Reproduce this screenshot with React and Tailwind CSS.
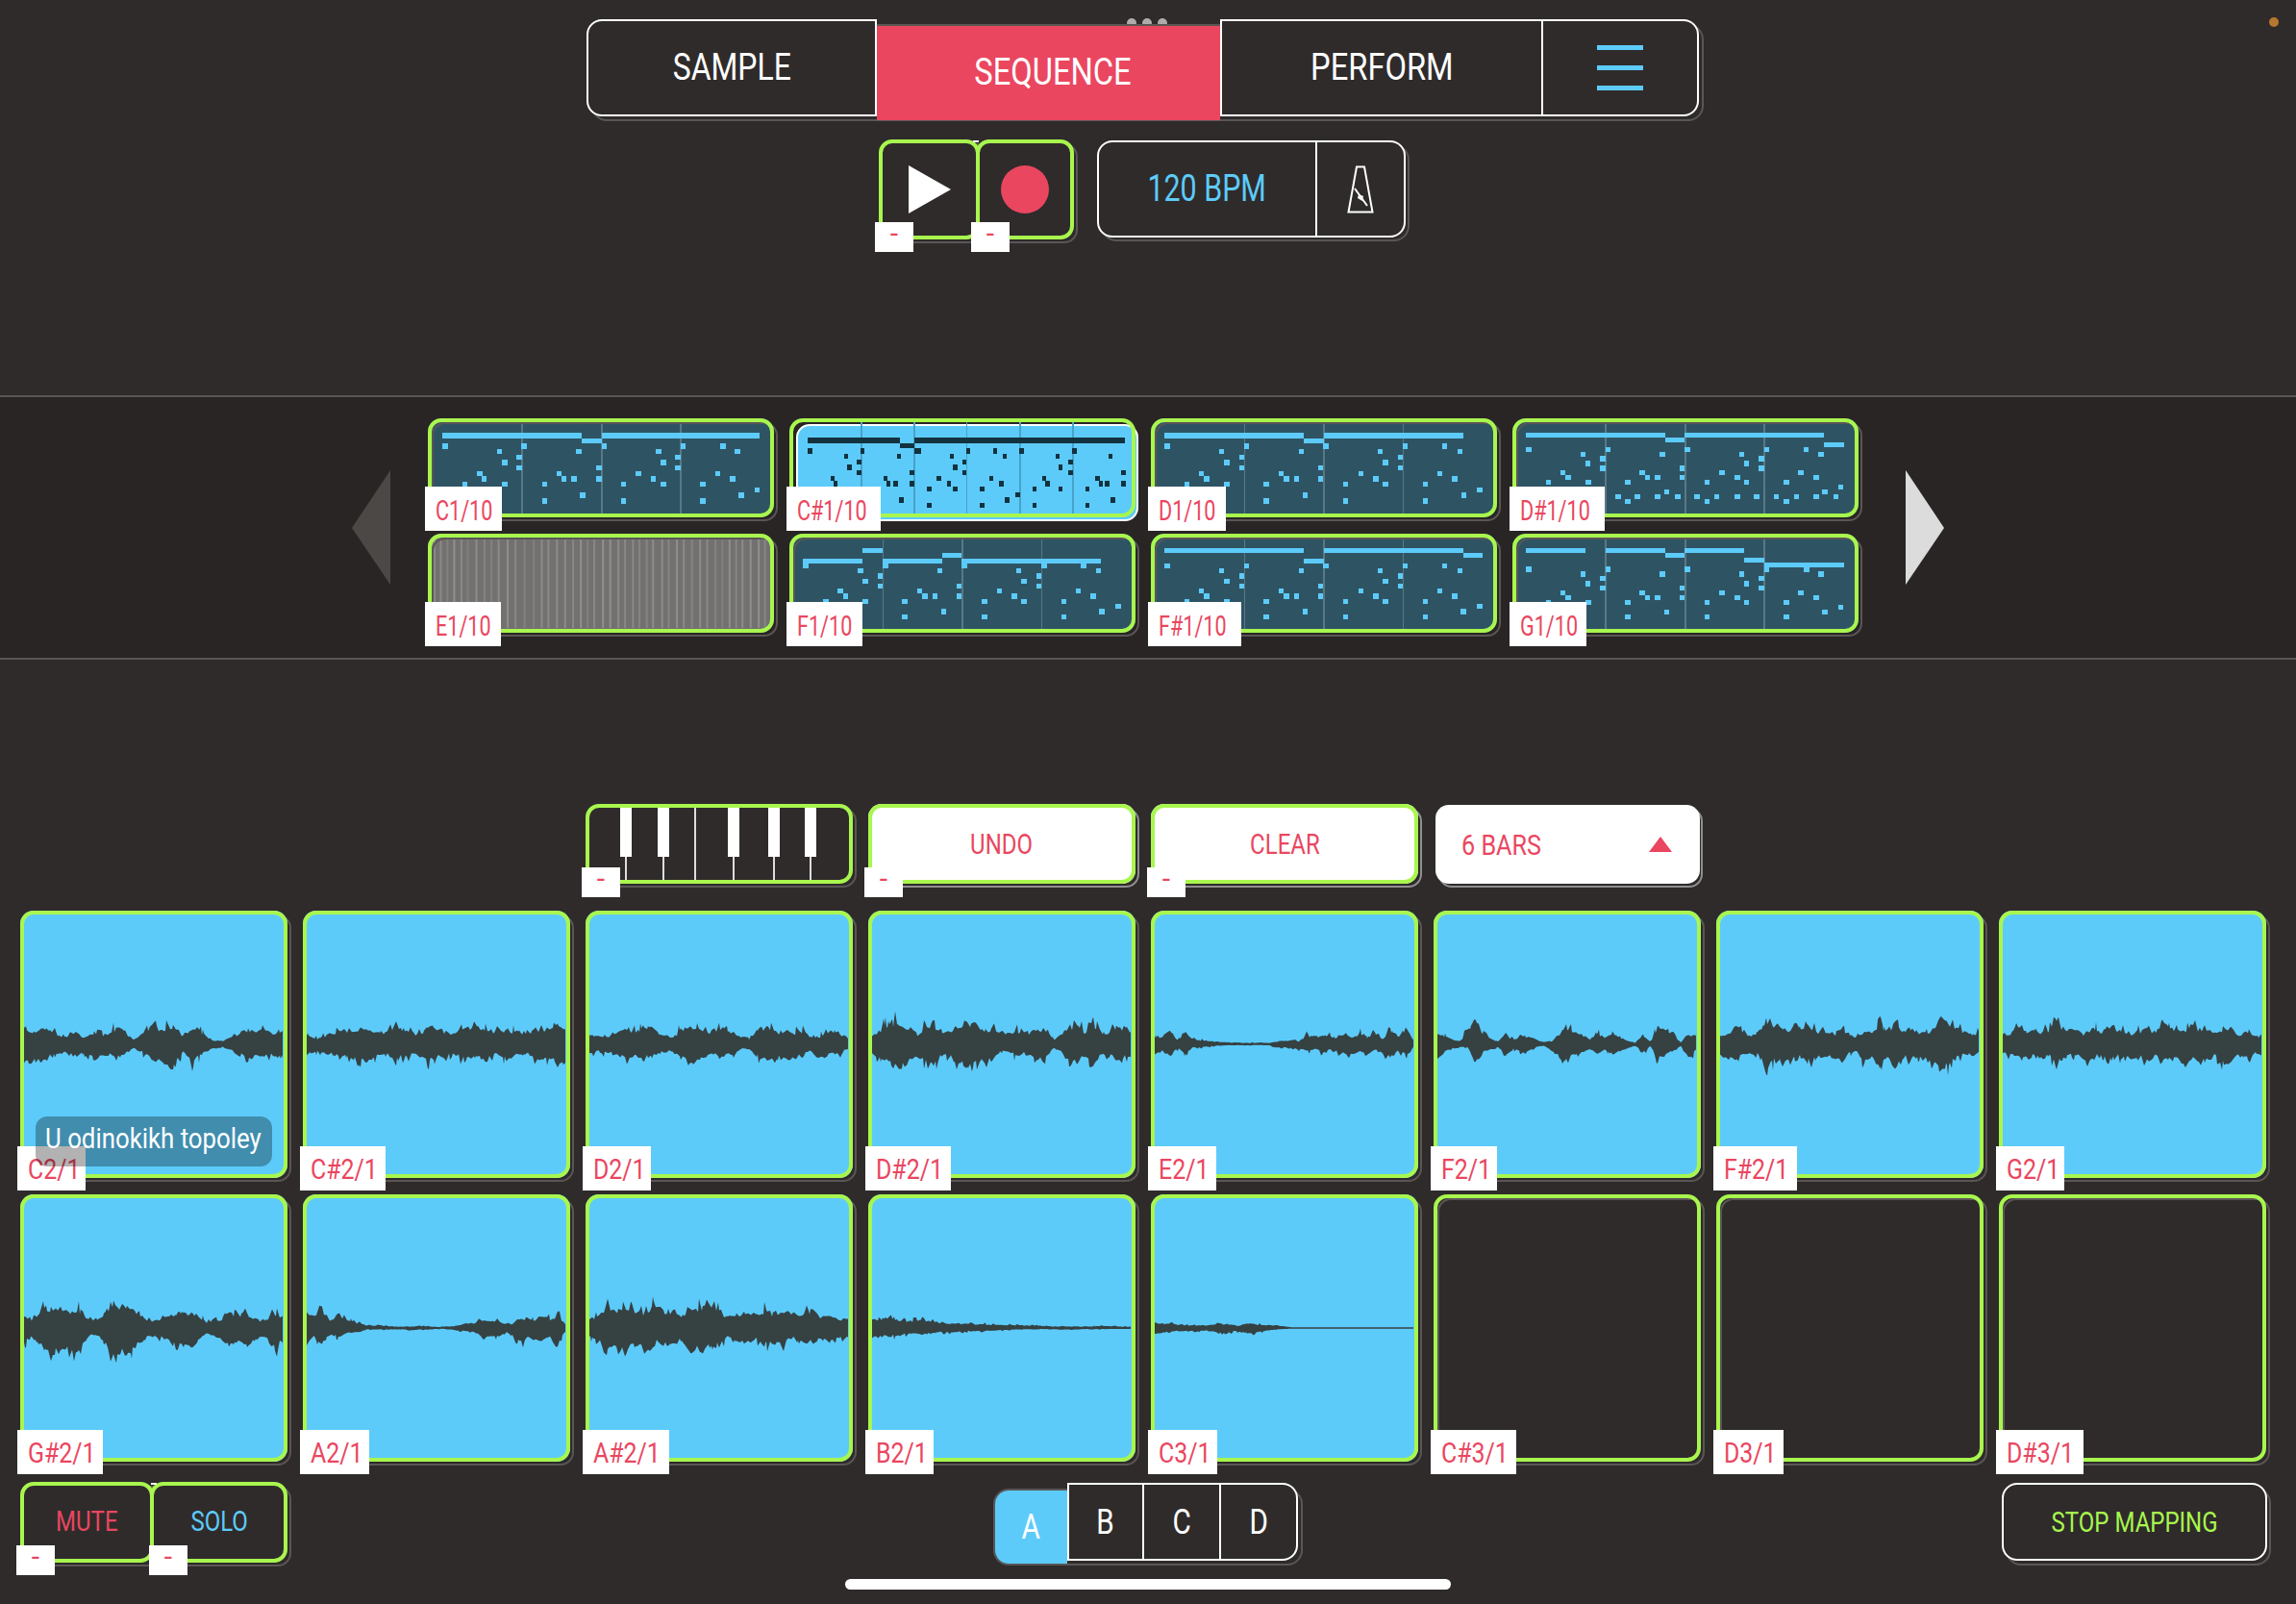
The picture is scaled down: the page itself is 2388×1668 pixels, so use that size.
const BLUE = '#5dcbfa';

const chartData = {
  c1: {
    o: [191, 108], lines: [369, 520, 670],
    bars: [[219, 482, 153, 171], [482, 520, 171, 187], [520, 820, 153, 171]],
    dots: [[224,195],[327,212],[373,195],[477,212],[525,195],[628,212],[675,195],[750,195],[778,212],[337,246],[364,229],[364,263],[515,263],[637,246],[665,229],[665,263],[289,280],[298,297],[440,280],[449,297],[468,297],[515,297],[590,280],[618,297],[740,280],[769,297],[261,314],[337,314],[412,314],[562,314],[637,314],[712,314],[815,331],[412,366],[484,348],[562,366],[712,366],[785,348]],
  },
  cs1: {
    o: [878, 108], lines: [1014, 1114, 1214, 1315, 1415], sel: true,
    bars: [[913, 1088, 168, 185], [1088, 1114, 185, 202], [1114, 1514, 168, 185], [1114, 1128, 202, 218]],
    dots: [[917,210],[985,227],[1017,210],[1086,227],[1186,227],[1217,210],[1268,210],[1286,227],[1318,210],[1386,227],[1418,210],[1487,227],[1010,244],[992,261],[1010,278],[1110,278],[1192,261],[1210,244],[1210,278],[1392,261],[1411,244],[1411,278],[1511,278],[960,295],[966,312],[1060,295],[1066,312],[1079,312],[1110,312],[1161,295],[1180,312],[1192,329],[1261,295],[1280,312],[1361,295],[1367,312],[1392,329],[1462,295],[1468,312],[1480,312],[1511,312],[1143,329],[1243,329],[1343,329],[1443,329],[1090,363],[1143,380],[1243,380],[1291,363],[1311,346],[1343,380],[1443,380],[1491,363]],
  },
  d1: {
    o: [32, 108], lines: [209, 360, 510],
    bars: [[58, 322, 153, 171], [322, 360, 171, 187], [360, 624, 153, 171]],
    dots: [[63,195],[166,212],[213,195],[317,212],[364,195],[467,212],[514,195],[589,195],[618,212],[176,246],[204,229],[204,263],[354,263],[477,246],[505,229],[505,263],[128,280],[138,297],[279,280],[289,297],[308,297],[354,297],[430,280],[458,297],[580,280],[608,297],[100,314],[176,314],[251,314],[401,314],[477,314],[552,314],[655,331],[251,366],[324,348],[401,366],[552,366],[625,348]],
  },
  ds1: {
    o: [718, 108], lines: [894, 1045, 1195],
    bars: [[744, 1007, 153, 168], [1007, 1045, 168, 182], [1045, 1308, 153, 168], [1308, 1346, 183, 197]],
    dots: [[749,205],[852,220],[899,205],[1002,220],[1050,205],[1153,220],[1200,205],[1275,205],[1303,220],[861,249],[889,234],[889,264],[1162,249],[1190,234],[1190,264],[1040,264],[814,278],[824,293],[964,278],[974,293],[993,293],[1040,293],[1115,278],[1144,293],[1265,278],[1294,293],[786,308],[862,308],[937,308],[1087,308],[1162,308],[1237,308],[1340,322],[918,352],[937,367],[955,352],[993,352],[1010,338],[1031,352],[1068,352],[1087,367],[1105,352],[1144,352],[1181,352],[1218,352],[1237,367],[1256,352],[1294,352],[1310,338],[1331,352]],
  },
  f1: {
    o: [878, 468], lines: [1055, 1205, 1356],
    bars: [[904,1017,545,561],[904,915,561,577],[1017,1055,513,528],[1055,1168,545,561],[1055,1066,561,577],[1168,1205,529,544],[1205,1468,545,561],[1205,1216,561,577],[1355,1366,561,577],[1430,1441,561,577]],
    dots: [[1013,584],[1163,584],[1313,584],[1464,584],[1050,600],[1351,600],[1022,616],[1323,616],[1050,632],[1200,632],[1351,632],[975,647],[985,663],[1125,647],[1135,663],[1154,663],[1200,663],[1276,647],[1304,663],[1426,647],[1454,663],[947,679],[1022,679],[1097,679],[1248,679],[1323,679],[1398,679],[1501,695],[1470,711],[1170,711],[1097,727],[1248,727],[1398,727]],
  },
  fs1: {
    o: [32, 468], lines: [209, 360, 510],
    bars: [[58,322,513,528],[322,360,545,560],[360,624,513,528],[624,660,529,544]],
    dots: [[63,568],[166,584],[213,568],[317,584],[364,568],[467,584],[514,568],[589,568],[618,584],[176,616],[204,600],[204,632],[477,616],[505,600],[505,632],[354,632],[128,647],[138,663],[279,647],[289,663],[308,663],[354,663],[430,647],[458,663],[580,647],[608,663],[100,679],[176,679],[251,679],[401,679],[477,679],[552,679],[655,695],[624,711],[324,711],[251,727],[401,727],[552,727]],
  },
  g1: {
    o: [718, 468], lines: [894, 1045, 1195],
    bars: [[744,857,513,528],[894,1007,513,528],[1007,1045,529,542],[1045,1158,513,528],[1158,1195,543,557],[1195,1346,558,572],[1195,1205,572,587],[1270,1281,572,587]],
    dots: [[749,579],[852,594],[899,579],[1002,594],[1050,579],[1153,594],[1303,594],[861,624],[889,608],[889,638],[1162,624],[1190,608],[1190,638],[1040,638],[814,653],[824,668],[964,653],[974,668],[993,668],[1040,668],[1115,653],[1144,668],[1265,653],[1294,668],[786,683],[862,683],[937,683],[1087,683],[1162,683],[1237,683],[1340,698],[1310,712],[1010,712],[937,727],[1087,727],[1237,727]],
  },
};

function Chart({ d }) {
  const [ox, oy] = d.o;
  const ink = d.sel ? '#13323f' : BLUE;
  const w = d.sel ? 8 : 10;
  return (
    <svg viewBox={`${ox} ${oy} 656 309`} preserveAspectRatio="none" shapeRendering="crispEdges" className="absolute inset-0 w-full h-full">
      {d.lines.map((x) => (
        <rect key={x} x={x - 1} y={oy} width="3" height="309" fill={d.sel ? '#47a3c9' : '#5a7884'} />
      ))}
      {d.bars.map((b, i) => (
        <rect key={i} x={b[0]} y={b[2]} width={b[1] - b[0]} height={b[3] - b[2]} fill={ink} />
      ))}
      {d.dots.map((p, i) => (
        <rect key={i} x={p[0] - w / 2} y={p[1] - 8} width={w} height="16" fill={ink} />
      ))}
    </svg>
  );
}

function rng(seed) {
  let s = seed;
  return () => {
    s = (s * 16807) % 2147483647;
    return s / 2147483647;
  };
}

function Stripes() {
  const r = rng(77);
  const xs = [];
  for (let x = 6; x < 352; x += 6.5 + r() * 3) xs.push(x);
  return (
    <svg viewBox="0 0 360 103" preserveAspectRatio="none" className="absolute inset-0 w-full h-full">
      {xs.map((x, i) => (
        <rect key={i} x={x} y="5" width="2" height="93" fill="#ffffff" opacity={0.1 + r() * 0.12} />
      ))}
    </svg>
  );
}

function spiky(r, n) {
  const out = [];
  let from = 0.9;
  while (out.length < n) {
    const len = 1 + Math.floor(r() * 3);
    const to = r() < 0.12 ? 1.2 + r() * 0.2 : 0.72 + r() * 0.36;
    for (let k = 0; k < len && out.length < n; k++) out.push(from + ((to - from) * k) / len);
    from = to;
  }
  return out;
}

function Wave({ up, low, seed }) {
  const W = 270;
  const C = 50;
  const r = rng(seed * 7919 + 13);
  const su = spiky(r, W);
  const sl = spiky(r, W);
  const at = (arr, i) => {
    const f = (i / (W - 1)) * (arr.length - 1);
    const a = Math.floor(f);
    const b = Math.min(arr.length - 1, a + 1);
    return (arr[a] + (arr[b] - arr[a]) * (f - a)) / 3;
  };
  const top = [];
  const bot = [];
  for (let i = 0; i < W; i++) {
    top.push(`${i},${(C - Math.max(0.7, at(up, i) * su[i])).toFixed(1)}`);
    bot.unshift(`${i},${(C + Math.max(0.7, at(low, i) * sl[i])).toFixed(1)}`);
  }
  return (
    <svg viewBox={`0 0 ${W} 100`} className="w-[270px] h-[100px] shrink-0">
      <polygon points={[...top, ...bot].join(' ')} fill="#364142" />
    </svg>
  );
}

function Frame({ className = '', fill = '', ringClass = 'border-[#5a5656]', ringOver = false, content, children }) {
  const ring = <div className={`absolute inset-0 translate-x-[4px] translate-y-[4px] rounded-[14px] border-2 ${ringClass}`} />;
  return (
    <div className={`relative ${className}`}>
      {!ringOver && ring}
      <div className={`absolute inset-0 rounded-[14px] overflow-hidden ${fill}`}>{content}</div>
      {ringOver && ring}
      <div className="absolute inset-0 rounded-[14px] border-4 border-[#a8f64e]" />
      {children}
    </div>
  );
}

function Tag({ label, w, pad = false }) {
  return (
    <div className={`absolute left-[-3px] h-[46px] ${w} ${pad ? 'bottom-[-13px] pt-[1px]' : 'bottom-[-14px] pt-[3px]'} bg-white pl-[11px] flex items-center text-[30px] leading-none text-[#ea4660] whitespace-nowrap`}>
      <span className={`inline-block origin-left ${pad ? 'scale-x-[0.83]' : 'scale-x-[0.72]'}`}>{label}</span>
    </div>
  );
}

function Minus({ className = '' }) {
  return (
    <div className={`absolute w-[40px] h-[31px] bg-white flex justify-center text-[30px] leading-[24px] text-[#ea4660] ${className}`}>-</div>
  );
}

const clips = [
  { id: 'c1', label: 'C1/10', w: 'w-[80px]' },
  { id: 'cs1', label: 'C#1/10', w: 'w-[98px]' },
  { id: 'd1', label: 'D1/10', w: 'w-[81px]' },
  { id: 'ds1', label: 'D#1/10', w: 'w-[99px]' },
  { id: 'e1', label: 'E1/10', w: 'w-[79px]' },
  { id: 'f1', label: 'F1/10', w: 'w-[79px]' },
  { id: 'fs1', label: 'F#1/10', w: 'w-[97px]' },
  { id: 'g1', label: 'G1/10', w: 'w-[80px]' },
];

const pads = [
  { label: 'C2/1', w: 'w-[71px]', up: [60,45,50,40,25,42,25,40,30,50,50,15,40,60,50,65,30,60,35,15,10,30,40,55,45,35,50], low: [65,55,60,30,30,40,30,50,35,40,40,15,30,55,60,80,25,65,30,15,10,25,40,45,40,35,45] },
  { label: 'C#2/1', w: 'w-[89px]', up: [30,20,30,40,50,55,45,35,45,55,45,35,50,60,40,40,50,60,50,40,50,45,40,50,50,70,60], low: [35,25,30,35,40,50,55,40,35,50,40,35,60,45,40,35,55,40,55,35,50,40,30,50,45,55,65] },
  { label: 'D2/1', w: 'w-[71px]', up: [30,25,25,30,45,55,45,55,55,40,30,20,50,55,55,45,35,50,55,40,25,20,45,55,50,40,50,40,45,30,25,35,45,35,20], low: [30,25,30,25,40,60,35,60,35,30,25,20,50,55,60,45,30,45,40,30,15,15,40,50,60,45,60,40,30,25,40,40,35,30,15] },
  { label: 'D#2/1', w: 'w-[89px]', up: [30,45,70,75,60,55,35,60,65,40,40,65,70,70,60,45,55,40,40,45,35,45,45,50,15,35,60,60,45,65,45,35,55,55,50], low: [30,50,65,75,80,60,45,60,70,40,40,55,70,70,60,55,50,25,30,40,25,40,55,40,10,30,70,60,40,70,40,35,50,45,40] },
  { label: 'E2/1', w: 'w-[71px]', up: [30,25,45,15,45,15,15,12,10,8,6,6,5,5,6,5,8,12,14,10,30,25,25,30,20,35,25,40,25,40,20,50,25,50,15], low: [35,25,40,15,30,10,10,8,5,4,3,3,3,3,3,3,10,10,15,15,25,15,30,20,25,35,30,25,40,20,30,40,25,35,10] },
  { label: 'F2/1', w: 'w-[69px]', up: [35,25,15,10,50,85,35,20,8,35,15,25,30,15,8,10,35,60,40,35,15,40,20,40,25,15,5,30,8,60,50,40,5,35,30], low: [50,25,15,10,10,70,30,15,8,45,15,30,20,10,5,20,40,60,35,25,15,30,15,35,25,15,5,30,5,55,35,25,5,50,20] },
  { label: 'F#2/1', w: 'w-[87px]', up: [30,35,55,45,30,45,85,70,60,50,65,50,60,40,45,35,50,35,25,45,35,65,50,70,40,50,45,35,50,90,70,55,40,35,40], low: [35,45,50,35,30,35,85,60,55,45,50,40,55,40,55,35,60,30,25,65,50,70,40,75,40,50,50,55,75,80,70,50,35,35,30] },
  { label: 'G2/1', w: 'w-[71px]', up: [35,30,70,45,50,40,50,70,45,55,45,30,60,35,65,40,45,35,45,50,45,75,50,60,45,65,50,45,35,45,55,30,40,30,25], low: [30,40,35,50,40,55,40,60,45,40,35,55,40,45,60,40,50,45,40,55,40,65,50,50,70,40,65,55,40,65,55,35,50,35,25] },
  { label: 'G#2/1', w: 'w-[89px]', up: [40,30,55,70,60,65,55,65,45,30,30,60,70,70,60,55,25,25,25,45,45,50,50,40,20,25,30,50,40,50,35,25,30,50,35], low: [50,30,50,85,80,85,70,80,45,20,30,70,85,85,75,55,35,30,30,45,65,60,60,40,20,30,40,55,50,65,45,35,40,75,35] },
  { label: 'A2/1', w: 'w-[72px]', up: [55,45,55,30,40,30,20,15,8,8,8,6,5,5,6,6,5,4,5,6,10,15,15,25,20,30,15,15,30,35,25,40,30,45,15], low: [60,30,60,25,30,20,15,12,5,5,5,5,5,5,8,5,5,3,3,5,10,12,15,30,25,30,15,20,50,35,30,50,25,55,10] },
  { label: 'A#2/1', w: 'w-[90px]', up: [30,40,75,60,65,60,50,80,55,60,40,75,65,70,60,35,45,50,45,60,45,45,55,45,60,40,35,30,35], low: [30,45,70,60,75,55,75,45,55,60,40,80,60,70,60,30,50,55,40,60,50,55,35,50,50,40,45,30,35] },
  { label: 'B2/1', w: 'w-[71px]', up: [30,35,25,25,25,20,15,15,12,12,10,10,8,8,5,5,5,6,7,5,5], low: [35,30,25,20,20,15,15,12,10,10,8,5,5,3,5,5,4,4,4,3,3] },
  { label: 'C3/1', w: 'w-[72px]', up: [20,15,10,8,10,15,8,15,10,8,3,2,1,1,1,1,1,1,1,1], low: [20,12,10,10,10,20,10,20,10,5,2,1,1,1,1,1,1,1,1,1] },
  { label: 'C#3/1', w: 'w-[89px]' },
  { label: 'D3/1', w: 'w-[73px]' },
  { label: 'D#3/1', w: 'w-[91px]' },
];

function ClipCell({ clip }) {
  if (clip.id === 'cs1') {
    return (
      <div className="relative w-[360px] h-[103px]">
        <div className="absolute left-[7px] top-[6px] right-[-3px] bottom-[-4px] rounded-[14px] border-2 border-white bg-[#5dcbfa]" />
        <div className="absolute inset-0"><Chart d={chartData.cs1} /></div>
        <div className="absolute inset-0 rounded-[14px] border-4 border-[#a8f64e]" />
        <Tag label={clip.label} w={clip.w} />
      </div>
    );
  }
  const isE = clip.id === 'e1';
  return (
    <Frame
      className="w-[360px] h-[103px]"
      fill={isE ? 'bg-[#737070]' : 'bg-[#2e5464]'}
      ringOver
      content={isE ? <Stripes /> : <Chart d={chartData[clip.id]} />}
    >
      <Tag label={clip.label} w={clip.w} />
    </Frame>
  );
}

function PadCell({ pad, index }) {
  const filled = !!pad.up;
  return (
    <Frame
      className="w-[278px] h-[278px]"
      fill={filled ? 'bg-[#5dcbfa] flex items-center justify-center' : ''}
      ringOver={!filled}
      content={filled ? <Wave up={pad.up} low={pad.low} seed={index + 1} /> : null}
    >
      <Tag label={pad.label} w={pad.w} pad />
      {index === 0 && (
        <div className="absolute left-[16px] top-[214px] w-[246px] h-[52px] rounded-[12px] bg-black/30 pl-[10px] pb-[6px] flex items-center text-[30px] leading-none text-white whitespace-nowrap">
          <span className="inline-block origin-left scale-x-[0.86]">U odinokikh topoley</span>
        </div>
      )}
    </Frame>
  );
}

function PairButton({ left, right, leftW, rightW, h, tagTop, secondTag, junction }) {
  return (
    <div className={`relative flex ${h}`}>
      <div className="absolute inset-0 translate-x-[4px] translate-y-[4px] rounded-[14px] border-2 border-[#5a5656]" />
      <div className={`relative ${leftW} h-full rounded-[14px] border-4 border-[#a8f64e] bg-[#2f2b2b] flex items-center justify-center`}>
        {left}
      </div>
      <div className={`relative ${rightW} ml-[-4px] h-full rounded-[14px] border-4 border-[#a8f64e] bg-[#2f2b2b] flex items-center justify-center`}>
        {right}
      </div>
      <div className={`absolute top-[1px] w-[6px] h-[2px] bg-white ${junction}`} />
      <Minus className={`left-[-4px] ${tagTop}`} />
      <Minus className={`${secondTag} ${tagTop}`} />
    </div>
  );
}

function ToolBtn({ children }) {
  return (
    <Frame className="w-[278px] h-[83px]" fill="bg-white" ringClass="border-[#8f8f8f]" content={null}>
      <div className="absolute inset-0 flex items-center justify-center text-[30px] text-[#ea4660]">
        <span className="inline-block scale-x-[0.8]">{children}</span>
      </div>
      <Minus className="left-[-4px] top-[66px]" />
    </Frame>
  );
}

export default function App() {
  return (
    <div className="relative w-[2388px] h-[1668px] overflow-hidden bg-[#2f2b2b] flex flex-col font-['Roboto',sans-serif]">
      {/* three dots + status dot */}
      <div className="absolute left-[1172px] top-[19px] flex gap-[6px]">
        <div className="w-[10px] h-[10px] rounded-full bg-[#aeacac]" />
        <div className="w-[10px] h-[10px] rounded-full bg-[#aeacac]" />
        <div className="w-[10px] h-[10px] rounded-full bg-[#aeacac]" />
      </div>
      <div className="absolute left-[2360px] top-[18px] w-[10px] h-[10px] rounded-full bg-[#b9762f]" />

      {/* Tabs */}
      <div className="relative flex ml-[610px] mt-[20px] w-[1157px] h-[101px] text-[38px] text-white">
        <div className="absolute inset-0 translate-x-[5px] translate-y-[5px] rounded-[16px] border-2 border-[#5a5656]" />
        <div className="relative w-[302px] h-full rounded-l-[16px] border-2 border-white bg-[#2f2b2b] flex items-center justify-center">
          <span className="inline-block scale-x-[0.84]">SAMPLE</span>
        </div>
        <div className="relative w-[357px] h-[98px] mt-[7px] pl-[8px] pb-[2px] bg-[#ea4660] flex items-center justify-center">
          <span className="inline-block scale-x-[0.86]">SEQUENCE</span>
        </div>
        <div className="relative w-[336px] h-full border-2 border-white bg-[#2f2b2b] flex items-center justify-center">
          <span className="inline-block scale-x-[0.86]">PERFORM</span>
        </div>
        <div className="relative w-[162px] h-full rounded-r-[16px] border-2 border-l-0 border-white bg-[#2f2b2b] flex flex-col items-center justify-center gap-[16px]">
          <div className="w-[48px] h-[5px] bg-[#5dcbfa]" />
          <div className="w-[48px] h-[5px] bg-[#5dcbfa]" />
          <div className="w-[48px] h-[5px] bg-[#5dcbfa]" />
        </div>
      </div>

      {/* Transport */}
      <div className="flex items-start ml-[914px] mt-[24px] h-[104px]">
        <PairButton
          leftW="w-[105px]"
          rightW="w-[102px]"
          h="h-[104px]"
          tagTop="top-[86px]"
          secondTag="left-[96px]"
          junction="left-[98px]"
          left={
            <svg viewBox="0 0 44 50" className="w-[44px] h-[50px]">
              <polygon points="0,0 44,25 0,50" fill="#ffffff" />
            </svg>
          }
          right={<div className="w-[50px] h-[50px] rounded-full bg-[#ea4660]" />}
        />
        <div className="relative flex ml-[24px] mt-[1px] w-[321px] h-[101px]">
          <div className="absolute inset-0 translate-x-[4px] translate-y-[4px] rounded-[16px] border-2 border-[#5a5656]" />
          <div className="relative w-[229px] h-full rounded-l-[16px] border-2 border-white bg-[#2f2b2b] flex items-center justify-center text-[38px] text-[#5dcbfa]">
            <span className="inline-block scale-x-[0.8]">120 BPM</span>
          </div>
          <div className="relative w-[92px] h-full rounded-r-[16px] border-2 border-l-0 border-white bg-[#2f2b2b] flex items-center justify-center">
            <svg viewBox="0 0 28 50" className="w-[28px] h-[50px]" fill="none" stroke="#ffffff" strokeWidth="2">
              <path d="M10 1.5h8l8.5 47h-25z" />
              <path d="M8 24l13 18" />
              <path d="M12 30l5 2-1 5-5-3z" fill="#ffffff" stroke="none" />
            </svg>
          </div>
        </div>
      </div>

      {/* Clip band */}
      <div className="flex items-center mt-[162px] h-[275px] pl-[366px] bg-[#292525] border-y-2 border-[#5a5656]">
        <svg viewBox="0 0 40 119" className="w-[40px] h-[119px] shrink-0">
          <polygon points="40,0 0,60 40,119" fill="#4b4845" />
        </svg>
        <div className="grid grid-cols-[repeat(4,360px)] grid-rows-[103px_103px] gap-x-[16px] gap-y-[17px] ml-[39px] mt-[-4px]">
          {clips.map((c) => (
            <ClipCell key={c.id} clip={c} />
          ))}
        </div>
        <svg viewBox="0 0 40 119" className="w-[40px] h-[119px] shrink-0 ml-[49px]">
          <polygon points="0,0 40,60 0,119" fill="#dcdcdc" />
        </svg>
      </div>

      {/* Toolbar */}
      <div className="flex gap-x-[16px] ml-[609px] mt-[150px] h-[83px]">
        <Frame className="w-[278px] h-[83px]" fill="bg-[#2f2b2b]" content={null}>
          <svg viewBox="0 0 278 83" className="absolute inset-0 w-full h-full" shapeRendering="crispEdges">
            {[36, 75, 148, 190, 228].map((x) => (
              <rect key={x} x={x} y="4" width="12" height="51" fill="#ffffff" />
            ))}
            {[41, 80, 153, 195, 233].map((x) => (
              <rect key={x} x={x} y="55" width="2" height="24" fill="#dddddd" />
            ))}
            <rect x="113" y="4" width="2" height="75" fill="#dddddd" />
          </svg>
          <Minus className="left-[-4px] top-[66px]" />
        </Frame>
        <ToolBtn>UNDO</ToolBtn>
        <ToolBtn>CLEAR</ToolBtn>
        <div className="relative w-[275px] h-[83px] ml-[2px]">
          <div className="absolute inset-0 translate-x-[3px] translate-y-[4px] rounded-[14px] border-2 border-[#8f8f8f]" />
          <div className="relative w-full h-[82px] mt-[1px] rounded-[14px] bg-white flex items-center justify-between pl-[27px] pr-[29px] text-[30px] text-[#ea4660]">
            <span className="inline-block origin-left scale-x-[0.84]">6 BARS</span>
            <svg viewBox="0 0 24 16" className="w-[24px] h-[16px]">
              <polygon points="12,0 24,16 0,16" fill="#ea4660" />
            </svg>
          </div>
        </div>
      </div>

      {/* Pads */}
      <div className="grid grid-cols-[repeat(8,278px)] gap-x-[16px] gap-y-[17px] ml-[21px] mt-[28px]">
        {pads.map((p, i) => (
          <PadCell key={p.label} pad={p} index={i} />
        ))}
      </div>

      {/* Bottom row */}
      <div className="flex items-start ml-[21px] mt-[21px] h-[84px]">
        <PairButton
          leftW="w-[139px]"
          rightW="w-[143px]"
          h="h-[84px]"
          tagTop="top-[66px]"
          secondTag="left-[134px]"
          junction="left-[136px]"
          left={<span className="inline-block mb-[3px] scale-x-[0.8] text-[30px] text-[#ea4660]">MUTE</span>}
          right={<span className="inline-block mb-[3px] ml-[2px] scale-x-[0.8] text-[30px] text-[#5dcbfa]">SOLO</span>}
        />
        <div className="relative flex ml-[734px] mt-[1px] w-[317px] h-[81px] text-[37px] text-white">
          <div className="absolute left-0 top-[6px] w-[322px] h-[80px] rounded-[16px] border-2 border-[#5a5656]" />
          <div className="relative w-[75px] h-[76px] mt-[8px] ml-[2px] rounded-l-[14px] bg-[#5dcbfa] flex items-center justify-center">
            <span className="inline-block scale-x-[0.8]">A</span>
          </div>
          <div className="relative w-[81px] h-full border-2 border-white bg-[#2f2b2b] flex items-center justify-center">
            <span className="inline-block scale-x-[0.8]">B</span>
          </div>
          <div className="relative w-[80px] h-full border-2 border-l-0 border-white bg-[#2f2b2b] flex items-center justify-center">
            <span className="inline-block scale-x-[0.8]">C</span>
          </div>
          <div className="relative w-[81px] h-full rounded-r-[16px] border-2 border-l-0 border-white bg-[#2f2b2b] flex items-center justify-center">
            <span className="inline-block scale-x-[0.8]">D</span>
          </div>
        </div>
        <div className="relative ml-[732px] mt-[1px] w-[276px] h-[81px]">
          <div className="absolute inset-0 translate-x-[4px] translate-y-[5px] rounded-[16px] border-2 border-[#5a5656]" />
          <div className="relative w-full h-full rounded-[16px] border-2 border-white bg-[#2f2b2b] flex items-center justify-center text-[30px] text-[#a8f64e] whitespace-nowrap">
            <span className="inline-block scale-x-[0.8]">STOP MAPPING</span>
          </div>
        </div>
      </div>

      {/* Home indicator */}
      <div className="ml-[879px] mt-[17px] w-[630px] h-[11px] rounded-full bg-white" />
    </div>
  );
}
